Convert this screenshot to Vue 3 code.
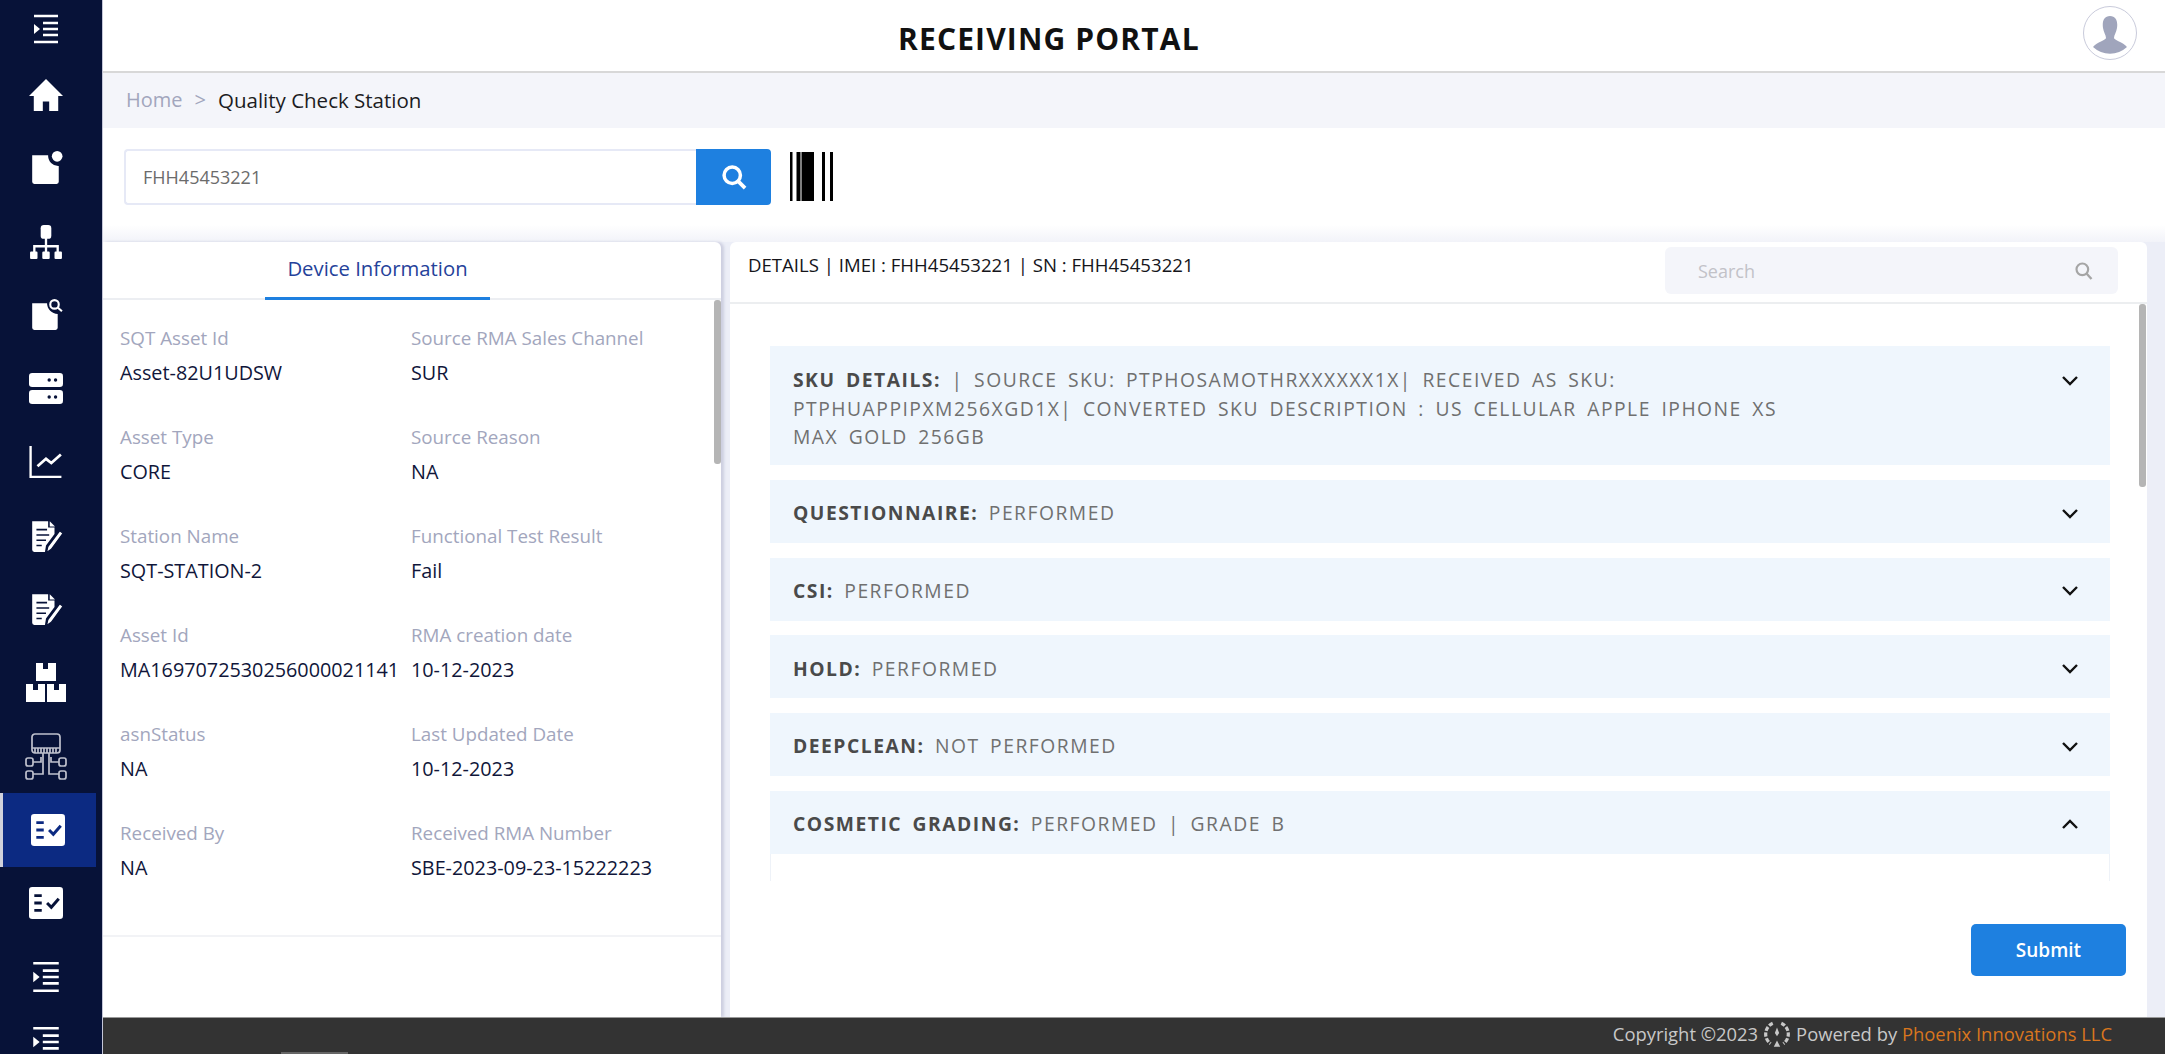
<script setup>
// пункты бокового меню
const menu = [
  'home', 'doc', 'tree', 'docsearch', 'server', 'chart', 'edit', 'edit', 'boxes', 'network', 'check', 'check', 'indent', 'indent',
]

// нестандартные размеры иконок, остальные 34x34 при viewBox 32
const iconBox = (name) => {
  if (name === 'boxes') return { w: 42, h: 40, box: '0 0 42 40' }
  if (name === 'network') return { w: 42, h: 47, box: '0 0 42 47' }
  return { w: 34, h: 34, box: '0 0 32 32' }
}

const fields = [
  ['SQT Asset Id', 'Asset-82U1UDSW', 'Source RMA Sales Channel', 'SUR'],
  ['Asset Type', 'CORE', 'Source Reason', 'NA'],
  ['Station Name', 'SQT-STATION-2', 'Functional Test Result', 'Fail'],
  ['Asset Id', 'MA1697072530256000021141', 'RMA creation date', '10-12-2023'],
  ['asnStatus', 'NA', 'Last Updated Date', '10-12-2023'],
  ['Received By', 'NA', 'Received RMA Number', 'SBE-2023-09-23-15222223'],
]

const sections = [
  { title: 'QUESTIONNAIRE:', text: 'PERFORMED' },
  { title: 'CSI:', text: 'PERFORMED' },
  { title: 'HOLD:', text: 'PERFORMED' },
  { title: 'DEEPCLEAN:', text: 'NOT PERFORMED' },
]
</script>

<template>
  <div class="page">
    <aside class="sidebar">
      <div class="side-top">
        <svg class="ico" viewBox="0 0 32 32" width="32" height="32"><path d="M4 3h24M13 10h15M13 16h15M13 22h15M4 29h24" stroke="#fff" stroke-width="2.4" fill="none"/><path d="M4 11l6 5-6 5z" fill="#fff"/></svg>
      </div>
      <div
        v-for="(name, i) in menu"
        :key="i"
        class="side-item"
        :class="{ active: i === 10, last: i === 13 }"
      >
        <svg class="ico" :viewBox="iconBox(name).box" :width="iconBox(name).w" :height="iconBox(name).h">
          <path v-if="name === 'home'" d="M16 1L0 17h4.500v14h8.500v-9h6v9h8.500V17H32z" fill="#fff"/>
          <template v-else-if="name === 'doc'">
            <path d="M3 4h15a9.500 9.500 0 0 0 10 10v15a2 2 0 0 1-2 2H5a2 2 0 0 1-2-2V4z" fill="#fff"/>
            <circle cx="26.500" cy="5" r="5" fill="#fff"/>
          </template>
          <template v-else-if="name === 'tree'">
            <rect x="11" y="0" width="10" height="13" rx="3" fill="#fff"/>
            <path d="M16 12v8M5 26v-6h22v6M16 20v6" stroke="#fff" stroke-width="2.200" fill="none"/>
            <rect x="1" y="25" width="7" height="7" rx="1" fill="#fff"/>
            <rect x="12.500" y="25" width="7" height="7" rx="1" fill="#fff"/>
            <rect x="24" y="25" width="7" height="7" rx="1" fill="#fff"/>
          </template>
          <template v-else-if="name === 'docsearch'">
            <path d="M3 5h14a10 10 0 0 0 10 10v13a2 2 0 0 1-2 2H5a2 2 0 0 1-2-2V5z" fill="#fff"/>
            <circle cx="24" cy="6" r="4" fill="none" stroke="#fff" stroke-width="2"/>
            <path d="M27 9l4 3.500" stroke="#fff" stroke-width="2"/>
          </template>
          <template v-else-if="name === 'server'">
            <rect x="0" y="1" width="32" height="13" rx="3" fill="#fff"/>
            <rect x="0" y="17" width="32" height="13" rx="3" fill="#fff"/>
            <circle cx="19" cy="7.500" r="1.600" fill="#071238"/><circle cx="25" cy="7.500" r="1.600" fill="#071238"/>
            <circle cx="19" cy="23.500" r="1.600" fill="#071238"/><circle cx="25" cy="23.500" r="1.600" fill="#071238"/>
          </template>
          <template v-else-if="name === 'chart'">
            <path d="M1.500 1v29h29" stroke="#fff" stroke-width="2.200" fill="none"/>
            <path d="M8 20l8-7 5 4 9-8" stroke="#fff" stroke-width="2.600" fill="none"/>
          </template>
          <template v-else-if="name === 'edit'">
            <path d="M3 2h15v6h6v6l-8 11-1 6H5a2 2 0 0 1-2-2z" fill="#fff"/>
            <path d="M19.500 2l5 5h-5z" fill="#fff"/>
            <path d="M7 10h10M7 15h12M7 20h9M7 25h5" stroke="#071238" stroke-width="1.500"/>
            <path d="M29 11l3 2.500-11 15-4.500 3 1.200-5.500z" fill="#fff" stroke="#071238" stroke-width="1.200"/>
          </template>
          <template v-else-if="name === 'boxes'">
            <path d="M11 0h7v6h5V0h8v18H11zM1 21h7v6h5v-6h7v18H1zM22 21h7v6h5v-6h7v18H22z" fill="#fff"/>
            <path d="M18 5h5M8 26h5M29 26h5" stroke="#071238" stroke-width="1"/>
          </template>
          <template v-else-if="name === 'network'">
            <g fill="none" stroke="#bfc1cd" stroke-width="1.700">
              <rect x="7" y="1" width="28" height="19" rx="3"/>
              <path d="M7 15h28M10 15v5M13 15v5M16 15v5M19 15v5M22 15v5M25 15v5M28 15v5M31 15v5"/>
              <path d="M18 20v21H8M24 20v21h10M16 24v5H8M26 24v5h8"/>
              <rect x="1" y="25" width="7" height="8" rx="2"/><rect x="34" y="25" width="7" height="8" rx="2"/>
              <rect x="1" y="38" width="7" height="8" rx="2"/><rect x="34" y="38" width="7" height="8" rx="2"/>
            </g>
          </template>
          <template v-else-if="name === 'check'">
            <rect x="0" y="1" width="32" height="30" rx="3" fill="#fff"/>
            <path d="M5 9h7M5 16h7M5 23h7" :stroke="i === 10 ? '#0c2a82' : '#071238'" stroke-width="2.600"/>
            <path d="M17 16l4 4 7-8" :stroke="i === 10 ? '#0c2a82' : '#071238'" stroke-width="2.800" fill="none"/>
          </template>
          <template v-else>
            <path d="M4 3h24M13 10h15M13 16h15M13 22h15M4 29h24" stroke="#fff" stroke-width="2.400" fill="none"/>
            <path d="M4 11l6 5-6 5z" fill="#fff"/>
          </template>
        </svg>
      </div>
    </aside>

    <div class="main">
      <header class="topbar">
        <h1 class="title">RECEIVING PORTAL</h1>
        <div class="avatar">
          <svg viewBox="0 0 52 52" width="52" height="52">
            <path d="M26 9c6 0 8 5 7 12-.5 4-3 7-3 10 0 2 9 4 13 9a25 25 0 0 1-34 0c4-5 13-7 13-9 0-3-2.500-6-3-10-1-7 1-12 7-12z" fill="#a0a5bc"/>
          </svg>
        </div>
      </header>

      <nav class="crumbs">
        <span class="crumb-home">Home</span>
        <span class="crumb-sep">&gt;</span>
        <span class="crumb-cur">Quality Check Station</span>
      </nav>

      <section class="searchbar">
        <div class="scan-input">FHH45453221</div>
        <button class="scan-btn">
          <svg viewBox="0 0 24 24" width="28" height="28"><circle cx="10.500" cy="10.500" r="7" fill="none" stroke="#fff" stroke-width="3"/><path d="M15.500 15.500l6 6" stroke="#fff" stroke-width="3.200"/></svg>
        </button>
        <svg class="barcode" viewBox="0 0 44 49" width="44" height="49" preserveAspectRatio="none">
          <path d="M0 0h2.500v49H0zM6.500 0h4v49h-4zM11.500 0h12.500v49H11.500zM32 0h3v49h-3zM40 0h3v49h-3z" fill="#000"/>
        </svg>
      </section>

      <section class="panels">
        <div class="panel-left">
          <div class="tabs"><div class="tab">Device Information</div></div>
          <div class="fields">
            <template v-for="row in fields" :key="row[0]">
              <div class="field">
                <div class="f-label">{{ row[0] }}</div>
                <div class="f-value">{{ row[1] }}</div>
              </div>
              <div class="field">
                <div class="f-label">{{ row[2] }}</div>
                <div class="f-value">{{ row[3] }}</div>
              </div>
            </template>
          </div>
          <div class="left-scroll"></div>
        </div>

        <div class="panel-right">
          <div class="right-head">
            <div class="head-text">DETAILS | IMEI : FHH45453221 | SN : FHH45453221</div>
            <div class="head-search">
              <span>Search</span>
              <svg viewBox="0 0 24 24" width="20" height="20"><circle cx="10" cy="10" r="7" fill="none" stroke="#a5a5a5" stroke-width="2.600"/><path d="M15 15l6 6.500" stroke="#a5a5a5" stroke-width="2.800"/></svg>
            </div>
          </div>
          <div class="right-body">
            <div class="acc acc-first">
              <div class="acc-text">
                <div><b>SKU DETAILS:</b> | SOURCE SKU: PTPHOSAMOTHRXXXXXX1X| RECEIVED AS SKU:</div>
                <div>PTPHUAPPIPXM256XGD1X| CONVERTED SKU DESCRIPTION : US CELLULAR APPLE IPHONE XS</div>
                <div>MAX GOLD 256GB</div>
              </div>
              <svg class="chev" viewBox="0 0 18 12" width="18" height="12"><path d="M2 2l7 7 7-7" fill="none" stroke="#111" stroke-width="2.400"/></svg>
            </div>
            <div v-for="s in sections" :key="s.title" class="acc">
              <div class="acc-text"><b>{{ s.title }}</b> {{ s.text }}</div>
              <svg class="chev" viewBox="0 0 18 12" width="18" height="12"><path d="M2 2l7 7 7-7" fill="none" stroke="#111" stroke-width="2.400"/></svg>
            </div>
            <div class="acc open">
              <div class="acc-text"><b>COSMETIC GRADING:</b> PERFORMED | GRADE B</div>
              <svg class="chev" viewBox="0 0 18 12" width="18" height="12"><path d="M2 10l7-7 7 7" fill="none" stroke="#111" stroke-width="2.400"/></svg>
            </div>
            <div class="acc-body"></div>
            <div class="right-scroll"></div>
            <button class="submit">Submit</button>
          </div>
        </div>
      </section>

      <footer class="footer">
        <span>Copyright ©2023</span>
        <svg viewBox="0 0 28 28" width="30" height="30"><g fill="none" stroke="#c8c8c8" stroke-width="3" stroke-dasharray="4 1.500"><path d="M10 4a11 11 0 0 0-2 19"/><path d="M18 4a11 11 0 0 1 2 19"/></g><path d="M14 8l2 5-2 3-2-3zM14 20l3 6h-6z" fill="#c8c8c8"/></svg>
        <span>Powered by <em>Phoenix Innovations LLC</em></span>
        <div class="h-thumb"></div>
      </footer>
    </div>
  </div>
</template>

<style>
html, body { margin: 0; overflow: hidden; }
</style>

<style scoped>
.page {
  display: flex;
  width: 2165px;
  height: 1054px;
  overflow: hidden;
  font-family: "Open Sans", "Noto Sans", sans-serif;
  background: #fff;
}

.sidebar {
  width: 102px;
  flex: none;
  background: #071238;
  border-right: 1px solid #c4c6d8;
}
.side-top {
  height: 58px;
  display: flex;
  align-items: center;
  justify-content: center;
  padding-right: 10px;
  box-sizing: border-box;
}
.side-item {
  height: 73.5px;
  display: flex;
  align-items: center;
  justify-content: center;
  padding-right: 10px;
  box-sizing: border-box;
}
.side-item.active {
  width: 96px;
  padding-right: 4px;
  background: #0c2a82;
  border-left: 3px solid #d0d2dc;
}
.side-item.last { margin-top: -8px; }

.main {
  flex: 1;
  min-width: 0;
  display: flex;
  flex-direction: column;
}

.topbar {
  height: 73px;
  flex: none;
  display: flex;
  align-items: center;
  justify-content: space-between;
  padding: 0 28px 0 795px;
  box-sizing: border-box;
  border-bottom: 2px solid #d8d8d8;
}
.title {
  margin: 5px 0 0;
  font-size: 30px;
  font-weight: 700;
  color: #111;
  letter-spacing: 1.150px;
}
.avatar {
  width: 52px;
  height: 52px;
  border: 1px solid #c9cbdb;
  border-radius: 50%;
  overflow: hidden;
  margin-top: -6px;
}
.avatar svg { display: block; }

.crumbs {
  height: 55px;
  flex: none;
  display: flex;
  align-items: center;
  gap: 12px;
  padding: 0 0 2px 23px;
  box-sizing: border-box;
  background: #f4f5fa;
  font-size: 20px;
}
.crumb-home { color: #a2a6bd; }
.crumb-sep { color: #a2a6bd; }
.crumb-cur { color: #1c1c22; font-size: 20.500px; }

.searchbar {
  height: 114px;
  flex: none;
  display: flex;
  align-items: flex-start;
  padding: 21px 0 0 21px;
  box-sizing: border-box;
  background: linear-gradient(#fff 85%, #f2f3f9);
}
.scan-input {
  width: 572px;
  height: 56px;
  box-sizing: border-box;
  border: 2px solid #e6e9f6;
  border-right: none;
  border-radius: 4px 0 0 4px;
  padding-left: 17px;
  line-height: 52px;
  font-size: 18px;
  color: #6b6b6b;
}
.scan-btn {
  width: 75px;
  height: 56px;
  border: none;
  border-radius: 0 4px 4px 0;
  background: #1e80e0;
  display: flex;
  align-items: center;
  justify-content: center;
  padding: 0;
}
.barcode { margin: 3px 0 0 19px; }

.panels {
  flex: 1;
  min-height: 0;
  display: flex;
  gap: 9px;
  padding-right: 18px;
  background: #eceef7;
}

.panel-left {
  width: 618px;
  flex: none;
  position: relative;
  background: #fff;
  border-radius: 0 6px 0 0;
  box-shadow: 3px 0 3px #cdcfe0;
}
.tabs {
  height: 58px;
  box-sizing: border-box;
  border-bottom: 2px solid #eceef2;
  padding-left: 162px;
}
.tab {
  width: 225px;
  height: 58px;
  box-sizing: border-box;
  border-bottom: 3px solid #1e80e0;
  text-align: center;
  line-height: 53px;
  font-size: 20.300px;
  font-weight: 500;
  color: #25429a;
}
.fields {
  display: grid;
  grid-template-columns: 291px 1fr;
  grid-auto-rows: 99px;
  padding: 25px 0 0 17px;
  height: 637px;
  box-sizing: border-box;
  border-bottom: 2px solid #f2f3f6;
}
.f-label {
  font-size: 18.800px;
  line-height: 26px;
  color: #a2a6bd;
}
.f-value {
  margin-top: 9px;
  font-size: 19.800px;
  line-height: 26px;
  color: #10163a;
}
.left-scroll {
  position: absolute;
  right: 0;
  top: 58px;
  width: 7px;
  height: 164px;
  background: #b5b5b5;
  border-radius: 3px;
}

.panel-right {
  flex: 1;
  min-width: 0;
  display: flex;
  flex-direction: column;
  background: #fff;
  border-radius: 6px 6px 0 0;
}
.right-head {
  height: 62px;
  flex: none;
  display: flex;
  justify-content: space-between;
  padding: 5px 29px 0 18px;
  box-sizing: border-box;
  border-bottom: 2px solid #eceef0;
}
.head-text {
  font-size: 18.600px;
  line-height: 35px;
  color: #15151a;
}
.head-search {
  width: 453px;
  height: 47px;
  box-sizing: border-box;
  display: flex;
  align-items: center;
  justify-content: space-between;
  padding: 0 24px 0 33px;
  background: #f4f5fa;
  border-radius: 6px;
  font-size: 18px;
  color: #c2c2c8;
}

.right-body {
  flex: 1;
  position: relative;
  padding: 42px 37px 0 40px;
}
.acc {
  min-height: 63px;
  margin-bottom: 14.700px;
  padding: 4px 31px 0 23px;
  display: flex;
  align-items: center;
  justify-content: space-between;
  background: #eff6fd;
  box-sizing: border-box;
}
.acc-first {
  height: 119px;
  margin-bottom: 15px;
  align-items: flex-start;
  padding-top: 20px;
}
.acc-first .chev { margin-top: 9px; }
.acc.open { margin-bottom: 0; }
.acc-text {
  font-size: 19.300px;
  line-height: 28.500px;
  letter-spacing: 1.500px;
  word-spacing: 4px;
  color: #707070;
  white-space: nowrap;
}
.acc-text b {
  font-weight: 700;
  color: #4a4a4a;
}
.acc-body {
  height: 27px;
  border: 1px solid #eef2f8;
  border-top: none;
  border-bottom: none;
}
.right-scroll {
  position: absolute;
  right: 1px;
  top: 0;
  width: 7px;
  height: 183px;
  background: #b5b5b5;
  border-radius: 3px;
}
.submit {
  position: absolute;
  right: 21px;
  top: 620px;
  width: 155px;
  height: 52px;
  border: none;
  border-radius: 5px;
  background: #1e80e0;
  color: #fff;
  font-family: inherit;
  font-size: 19px;
  font-weight: 600;
}

.footer {
  height: 37px;
  flex: none;
  position: relative;
  display: flex;
  align-items: center;
  justify-content: flex-end;
  gap: 4px;
  padding: 0 53px 5px 0;
  background: #333;
  border-top: 1px solid #999;
  box-sizing: border-box;
  font-size: 18.400px;
  color: #c8c8c8;
}
.footer em {
  font-style: normal;
  color: #d9761e;
}
.h-thumb {
  position: absolute;
  left: 178px;
  bottom: 0;
  width: 67px;
  height: 2px;
  background: #666;
}
</style>
